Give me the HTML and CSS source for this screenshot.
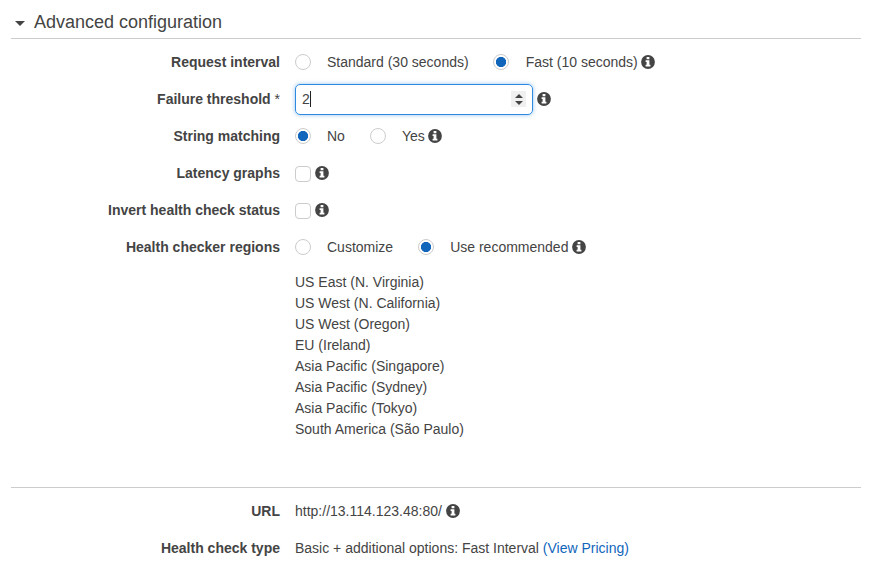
FILE: index.html
```html
<!DOCTYPE html>
<html lang="en">
<head>
<meta charset="utf-8">
<title>Advanced configuration</title>
<link rel="stylesheet" href="styles.css">
</head>
<body>
<svg class="defs" width="0" height="0"><symbol id="info" viewBox="0 0 14 14"><circle cx="7" cy="7" r="6.9" fill="#444"/><path fill="#fff" d="M5.600 2h2.800v2.200H5.600zM4.600 5.300h3.800v4.500h1v1.700H4.600V9.800h1V7h-1z"/></symbol></svg>
<main class="panel">
<h1 class="heading"><span class="caret"></span>Advanced configuration</h1>
<section class="form">
<div class="row"><label class="label">Request interval</label><div class="value"><i class="radio"></i><span class="option first">Standard (30 seconds)</span><i class="radio on"></i><span class="option wide">Fast (10 seconds)</span><svg class="info near"><use href="#info"/></svg></div></div>
<div class="row"><label class="label">Failure threshold <span class="star">*</span></label><div class="value"><div class="input"><span class="typed">2</span><span class="spin"><i class="up"></i><i class="down"></i></span></div><svg class="info"><use href="#info"/></svg></div></div>
<div class="row"><label class="label">String matching</label><div class="value"><i class="radio on"></i><span class="option first far">No</span><i class="radio"></i><span class="option">Yes</span><svg class="info near"><use href="#info"/></svg></div></div>
<div class="row"><label class="label">Latency graphs</label><div class="value"><i class="check"></i><svg class="info"><use href="#info"/></svg></div></div>
<div class="row"><label class="label">Invert health check status</label><div class="value"><i class="check"></i><svg class="info"><use href="#info"/></svg></div></div>
<div class="row"><label class="label">Health checker regions</label><div class="value"><i class="radio"></i><span class="option first far">Customize</span><i class="radio on"></i><span class="option">Use recommended</span><svg class="info"><use href="#info"/></svg></div></div>
<ul class="regions"><li>US East (N. Virginia)</li><li>US West (N. California)</li><li>US West (Oregon)</li><li>EU (Ireland)</li><li>Asia Pacific (Singapore)</li><li>Asia Pacific (Sydney)</li><li>Asia Pacific (Tokyo)</li><li>South America (São Paulo)</li></ul>
</section>
<section class="summary">
<div class="row"><span class="label">URL</span><div class="value">http://13.114.123.48:80/<svg class="info"><use href="#info"/></svg></div></div>
<div class="row"><span class="label">Health check type</span><div class="value"><span>Basic + additional options: Fast Interval <a class="link">(View Pricing)</a></span></div></div>
</section>
</main>
</body>
</html>
```
FILE: styles.css
```css
* { box-sizing: border-box; }
body { margin: 0; background: #fff; color: #444; font: 14px/21px "Liberation Sans", Arial, sans-serif; }
.defs { position: absolute; }
.panel { width: 850px; margin-left: 11px; }
.heading { display: flex; align-items: center; height: 39px; margin: 0; padding: 6px 0 0 4px; border-bottom: 1px solid #ccc; font-size: 18px; font-weight: 400; }
.caret { width: 10px; margin: 2px 9px 0 0; border: 5px solid transparent; border-top-color: #444; border-bottom: 0; }
.form { height: 448px; padding-top: 5px; }
.row { display: flex; align-items: center; height: 37px; }
.label { width: 269px; margin-right: 15px; text-align: right; font-weight: 700; }
.star { font-weight: 400; }
.value { display: flex; align-items: center; white-space: nowrap; }
.radio { display: block; width: 16px; height: 16px; margin-bottom: 2px; border: 1px solid #ccc; border-radius: 50%; }
.radio.on { background: radial-gradient(circle, #1166bb 4.8px, transparent 5.4px); }
.option { margin-left: 16px; }
.option.wide { margin-left: 17px; }
.option.first { margin-right: 24px; }
.option.far { margin-right: 25px; }
.check { width: 16px; height: 16px; border: 1px solid #ccc; border-radius: 4px; }
.info { width: 14px; height: 14px; margin: 0 0 2px 4px; }
.info.near { margin-left: 3px; }
.input { display: flex; align-items: center; justify-content: space-between; width: 238px; height: 31px; padding: 0 6px; border: 1px solid #2e8ae0; border-radius: 5px; box-shadow: 0 0 4px rgba(46, 138, 224, .5); }
.typed { height: 16px; margin-bottom: 1px; line-height: 17px; border-right: 1px solid #222; }
.spin { display: flex; flex-direction: column; align-items: center; justify-content: center; gap: 3px; width: 15px; height: 16px; margin-bottom: 1px; background: #f0f0f0; }
.up, .down { border: 4px solid transparent; }
.up { border-top: 0; border-bottom-color: #444; }
.down { border-bottom: 0; border-top-color: #444; }
.regions { margin: 6px 0 0 284px; padding: 0; list-style: none; }
.summary { padding-top: 5px; border-top: 1px solid #ccc; }
.link { color: #1166bb; }
```
